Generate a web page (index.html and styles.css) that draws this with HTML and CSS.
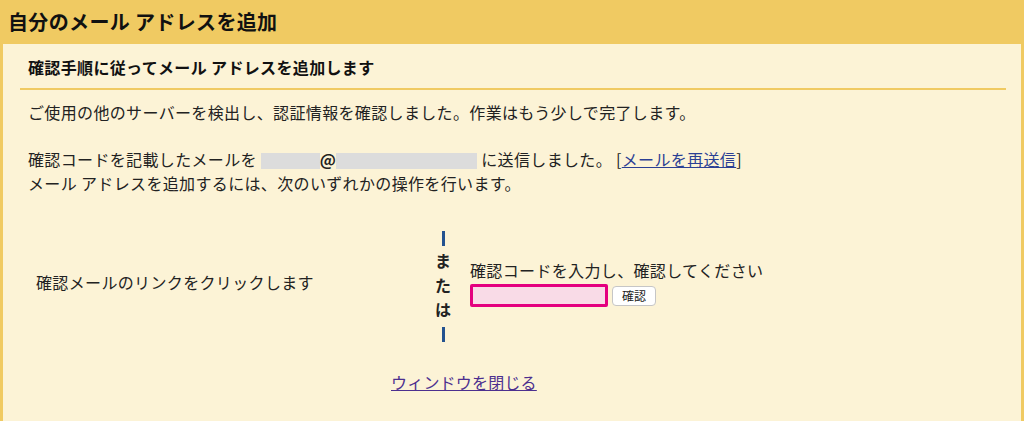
FILE: index.html
```html
<!DOCTYPE html>
<html lang="ja">
<head>
    <meta charset="UTF-8">
    <meta name="viewport" content="width=device-width, initial-scale=1.0">
    <title>自分のメール アドレスを追加</title>
    <link rel="stylesheet" href="styles.css">
</head>
<body>
    <div class="page">
        <h1 class="title">自分のメール アドレスを追加</h1>

        <div class="panel">
            <h2 class="subtitle">確認手順に従ってメール アドレスを追加します</h2>
            <hr class="rule">

            <p class="msg">ご使用の他のサーバーを検出し、認証情報を確認しました。作業はもう少しで完了します。</p>

            <p class="msg">
                確認コードを記載したメールを <span class="masked masked-user"></span><b>@</b><span class="masked masked-domain"></span> に送信しました。 [<a href="#" class="link">メールを再送信</a>]<br>
                メール アドレスを追加するには、次のいずれかの操作を行います。
            </p>

            <div class="choice">
                <div class="choice-left">確認メールのリンクをクリックします</div>
                <div class="choice-or">
                    <span class="bar"></span>
                    <span>ま</span>
                    <span>た</span>
                    <span>は</span>
                    <span class="bar"></span>
                </div>
                <div class="choice-right">
                    <div>確認コードを入力し、確認してください</div>
                    <form class="code-form" onsubmit="return false;">
                        <input type="text" class="code-input">
                        <button type="submit" class="code-button">確認</button>
                    </form>
                </div>
            </div>

            <div class="close">
                <a href="#" class="link link-visited">ウィンドウを閉じる</a>
            </div>
        </div>
    </div>
</body>
</html>
```

FILE: styles.css
```css
html, body {
    margin: 0;
    padding: 0;
}

body {
    font-family: "Noto Sans CJK JP", "Noto Sans", sans-serif;
    font-size: 16px;
    line-height: 24px;
    letter-spacing: 0.35px;
    color: #222;
    background-color: #fcf3d6;
}

.page {
    display: flex;
    flex-direction: column;
    min-height: 100vh;
}

/* top bar */
.title {
    margin: 0;
    height: 44px;
    line-height: 44px;
    padding-left: 8px;
    font-size: 20px;
    font-weight: bold;
    color: #111;
    background-color: #f0ca62;
}

.panel {
    flex: 1;
    border-left: 3px solid #f0ca62;
    border-right: 3px solid #f0ca62;
    background-color: #fcf3d6;
    padding-top: 11px;
}

.subtitle {
    margin: 0 0 0 25px;
    font-size: 16px;
    font-weight: bold;
    color: #111;
}

.rule {
    margin: 9px 15px 0 17px;
    border: none;
    height: 2px;
    background-color: #f0ca62;
}

.msg {
    margin: 10px 0 0 25px;
}

.msg + .msg {
    margin-top: 23px;
}

/* blanked out address */
.masked {
    display: inline-block;
    height: 16px;
    vertical-align: -3px;
    background-color: #dcdcdc;
}

.masked-user {
    width: 59px;
}

.masked-domain {
    width: 141px;
}

.link {
    color: #2b3f94;
    text-decoration: underline;
}

.link-visited {
    color: #4c2f8f;
}

/* click link  or  enter code */
.choice {
    display: flex;
    align-items: center;
    margin: 31px 0 0 25px;
}

.choice-left {
    width: 389px;
    padding-left: 8px;
    padding-bottom: 6px;
}

.choice-or {
    width: 36px;
    display: flex;
    flex-direction: column;
    align-items: center;
    font-weight: bold;
    line-height: 24.5px;
    letter-spacing: 0;
}

.choice-or .bar {
    display: block;
    width: 3px;
    height: 15px;
    margin: 5px 0 2px;
    background-color: #24528f;
}

.choice-right {
    padding-left: 9px;
    padding-bottom: 4px;
}

.code-form {
    display: flex;
    align-items: center;
    gap: 4px;
    margin: 2px 0 0 0;
}

.code-input {
    box-sizing: border-box;
    width: 138px;
    height: 23px;
    border: 3px solid #e4007f;
    border-radius: 2px;
    background-color: #f9dbe7;
    padding: 0 4px;
    margin: 0;
}

.code-button {
    box-sizing: border-box;
    width: 44px;
    height: 20px;
    padding: 0;
    border: 1px solid #c6c6c6;
    border-radius: 4px;
    background-color: #fff;
    font-family: "Noto Sans CJK JP", sans-serif;
    font-size: 12px;
    line-height: 18px;
    color: #222;
}

.close {
    margin-top: 26px;
    padding-left: 388px;
    letter-spacing: 0.2px;
}
```
